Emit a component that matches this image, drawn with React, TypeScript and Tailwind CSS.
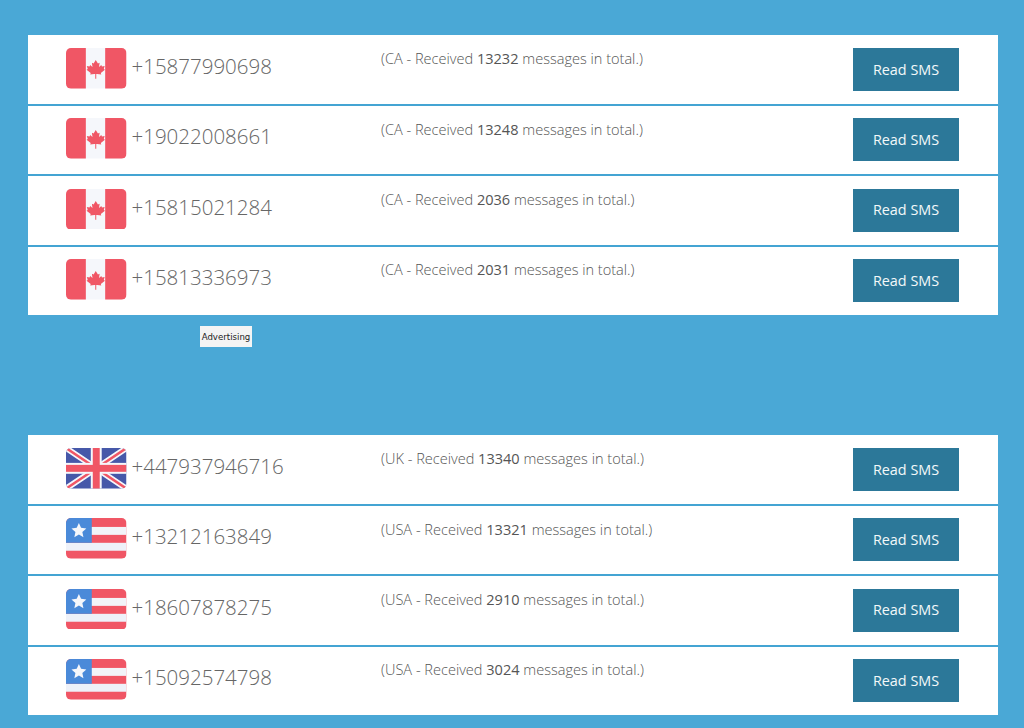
import React from 'react'

type Country = 'CA' | 'UK' | 'USA'

interface NumberRow {
  country: Country
  phone: string
  total: number
}

const canadaRows: NumberRow[] = [
  { country: 'CA', phone: '+15877990698', total: 13232 },
  { country: 'CA', phone: '+19022008661', total: 13248 },
  { country: 'CA', phone: '+15815021284', total: 2036 },
  { country: 'CA', phone: '+15813336973', total: 2031 },
]

const otherRows: NumberRow[] = [
  { country: 'UK', phone: '+447937946716', total: 13340 },
  { country: 'USA', phone: '+13212163849', total: 13321 },
  { country: 'USA', phone: '+18607878275', total: 2910 },
  { country: 'USA', phone: '+15092574798', total: 3024 },
]

const Flag: React.FC<{ country: Country }> = ({ country }) => {
  const id = `clip-${country}`
  return (
    <svg width="60.5" height="40.7" viewBox="0 0 61 41" className="shrink-0 block">
      <defs>
        <clipPath id={id}>
          <rect width="61" height="41" rx="5" />
        </clipPath>
      </defs>
      <g clipPath={`url(#${id})`}>
        {country === 'CA' && (
          <>
            <rect width="61" height="41" fill="#f5f7fb" />
            <rect width="20" height="41" fill="#f05665" />
            <rect x="39.5" width="21.5" height="41" fill="#f05665" />
            <path
              fill="#f05665"
              d="M30 12l2.2 3.6 1.7-.8-.6 4.3 2.3-2 .7 1.5 2.7-.4-.9 2.9 1.2.7-4.2 3.4.5 1.6-4.2-.5h-.9v4.6h-1v-4.6h-.9l-4.2.5.5-1.6-4.2-3.4 1.2-.7-.9-2.9 2.7.4.7-1.5 2.3 2-.6-4.3 1.7.8z"
            />
          </>
        )}
        {country === 'UK' && (
          <>
            <rect width="61" height="41" fill="#4658a9" />
            <path d="M0 0L61 41M61 0L0 41" stroke="#f5f7fb" strokeWidth="6" />
            <path d="M0 0L61 41M61 0L0 41" stroke="#f05665" strokeWidth="2.5" />
            <rect x="25" width="11" height="41" fill="#f5f7fb" />
            <rect y="15" width="61" height="11" fill="#f5f7fb" />
            <rect x="27" width="7" height="41" fill="#f05665" />
            <rect y="17" width="61" height="7" fill="#f05665" />
          </>
        )}
        {country === 'USA' && (
          <>
            <rect width="61" height="41" fill="#f05665" />
            <rect y="9" width="61" height="8" fill="#f2f4f9" />
            <rect y="25" width="61" height="8" fill="#eef1f9" />
            <rect width="26" height="25" fill="#4a8ad9" />
            <path
              fill="#f5f7fb"
              d="M13 5l2.2 4.9 5.3.6-4 3.6 1.1 5.3-4.6-2.7-4.6 2.7 1.1-5.3-4-3.6 5.3-.6z"
            />
          </>
        )}
      </g>
    </svg>
  )
}

const Row: React.FC<{ row: NumberRow }> = ({ row }) => (
  <div className="flex h-[70.33px] pt-[12.33px] first:h-[71px] first:pt-[13px] last:h-[68.53px] border-b-2 border-[#44a4d3] last:border-b-0 bg-white">
    <div className="flex w-[353px] shrink-0 pl-[38px]">
      <Flag country={row.country} />
      <span className="ml-[5px] text-[20.5px] leading-[37px] font-light text-[#666]">{row.phone}</span>
    </div>
    <div className="w-[472px] shrink-0 pt-[0.4px] text-[14.55px] leading-[20px] font-light text-[#555]">
      ({row.country} - Received <span className="font-normal">{row.total}</span> messages in total.)
    </div>
    <div>
      <button className="block h-[43px] w-[106px] bg-[#2c7899] text-[14.4px] text-[#f4f8fa]">Read SMS</button>
    </div>
  </div>
)

const App: React.FC = () => {
  return (
    <div
      className="min-h-[728px] bg-[#4aa8d6] px-[26px] pt-[35px] pb-[13px] overflow-hidden"
      style={{ fontFamily: '"Open Sans", sans-serif' }}
    >
      <div className="ml-[2px] w-[970px]">
        {canadaRows.map((row) => (
          <Row key={row.phone} row={row} />
        ))}
      </div>

      {/* Ad slot */}
      <div className="h-[119.8px] pl-[172px] pt-[11px]">
        <div
          className="ml-[2px] flex h-[21px] w-[52px] items-center justify-center bg-[#f4f4f4] pt-[2px] text-[8.6px] text-[#222]"
          style={{ fontFamily: '"DejaVu Sans", sans-serif' }}
        >
          Advertising
        </div>
      </div>

      <div className="ml-[2px] w-[970px]">
        {otherRows.map((row) => (
          <Row key={row.phone} row={row} />
        ))}
      </div>
    </div>
  )
}

export default App
